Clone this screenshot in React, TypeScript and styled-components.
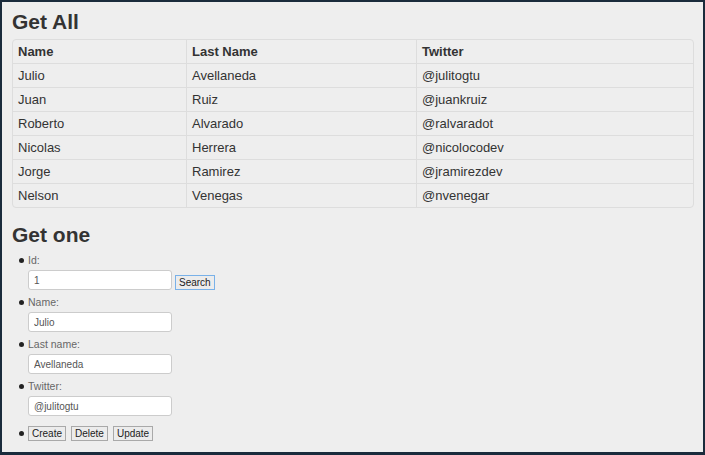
import { FC } from "react";
import styled, { createGlobalStyle } from "styled-components";

const GlobalStyle = createGlobalStyle`
  html, body {
    margin: 0;
    padding: 0;
    background: #eeeeee;
  }
  body {
    font-family: "Liberation Sans", Arial, Helvetica, sans-serif;
    color: #333333;
  }
`;

const Page = styled.div`
  box-sizing: border-box;
  width: 705px;
  height: 455px;
  border: 2px solid #1a2b3c;
  border-bottom-width: 3px;
  background: #eeeeee;
  padding: 6px 10px 0 10px;
  overflow: hidden;
`;

const Title = styled.h1`
  margin: 0;
  font-size: 21px;
  line-height: 28px;
  font-weight: bold;
  color: #333333;
`;

const TitleOne = styled(Title)`
  margin-top: 13px;
`;

const Table = styled.table`
  margin-top: 3px;
  width: 682px;
  border: 1px solid #dddddd;
  border-radius: 4px;
  border-collapse: separate;
  border-spacing: 0;
  table-layout: fixed;
  font-size: 13px;
`;

const Th = styled.th`
  box-sizing: border-box;
  height: 23px;
  padding: 0 5px;
  text-align: left;
  font-weight: bold;
  color: #333333;
  border-left: 1px solid #dddddd;
  &:first-child {
    border-left: none;
  }
`;

const Td = styled.td`
  box-sizing: border-box;
  height: 24px;
  padding: 0 5px;
  border-top: 1px solid #dddddd;
  border-left: 1px solid #dddddd;
  &:first-child {
    border-left: none;
  }
`;

const List = styled.ul`
  margin: 4px 0 0 0;
  padding-left: 16px;
  list-style: none;
  font-size: 10.5px;
  color: #666666;
`;

const Item = styled.li`
  position: relative;
  margin-bottom: 5px;
  &::before {
    content: "";
    position: absolute;
    left: -9px;
    top: 5px;
    width: 5px;
    height: 5px;
    border-radius: 50%;
    background: #222222;
  }
`;

const Label = styled.div`
  line-height: 14px;
  margin-bottom: 3px;
`;

const Input = styled.input`
  box-sizing: border-box;
  width: 144px;
  height: 20px;
  border: 1px solid #cccccc;
  border-radius: 3px;
  background: #ffffff;
  padding: 0 5px;
  font-family: "Liberation Sans", Arial, sans-serif;
  font-size: 10px;
  color: #555555;
  vertical-align: bottom;
  outline: none;
`;

const Button = styled.button<{ $focus?: boolean }>`
  box-sizing: border-box;
  height: 15px;
  padding: 0 3px;
  margin-left: ${(p) => (p.$focus ? "3px" : "0")};
  margin-right: 5px;
  border: 1px solid ${(p) => (p.$focus ? "#79b1e8" : "#a9a9a9")};
  background: #ececec;
  font-family: "Liberation Sans", Arial, sans-serif;
  font-size: 10px;
  line-height: 13px;
  color: #222222;
  vertical-align: bottom;
`;

const ButtonRow = styled.div`
  display: flex;
`;

const ButtonItem = styled(Item)`
  padding-top: 5px;
  &::before {
    top: 10px;
  }
`;

type Person = { name: string; last: string; twitter: string };

const people: Person[] = [
  { name: "Julio", last: "Avellaneda", twitter: "@julitogtu" },
  { name: "Juan", last: "Ruiz", twitter: "@juankruiz" },
  { name: "Roberto", last: "Alvarado", twitter: "@ralvaradot" },
  { name: "Nicolas", last: "Herrera", twitter: "@nicolocodev" },
  { name: "Jorge", last: "Ramirez", twitter: "@jramirezdev" },
  { name: "Nelson", last: "Venegas", twitter: "@nvenegar" },
];

const App: FC = () => {
  return (
    <>
      <GlobalStyle />
      <Page>
        <Title>Get All</Title>
        <Table>
          <colgroup>
            <col style={{ width: 173 }} />
            <col style={{ width: 230 }} />
            <col />
          </colgroup>
          <thead>
            <tr>
              <Th>Name</Th>
              <Th>Last Name</Th>
              <Th>Twitter</Th>
            </tr>
          </thead>
          <tbody>
            {people.map((p) => (
              <tr key={p.twitter}>
                <Td>{p.name}</Td>
                <Td>{p.last}</Td>
                <Td>{p.twitter}</Td>
              </tr>
            ))}
          </tbody>
        </Table>
        <TitleOne>Get one</TitleOne>
        <List>
          <Item>
            <Label>Id:</Label>
            <Input defaultValue="1" />
            <Button $focus>Search</Button>
          </Item>
          <Item>
            <Label>Name:</Label>
            <Input defaultValue="Julio" />
          </Item>
          <Item>
            <Label>Last name:</Label>
            <Input defaultValue="Avellaneda" />
          </Item>
          <Item>
            <Label>Twitter:</Label>
            <Input defaultValue="@julitogtu" />
          </Item>
          <ButtonItem>
            <ButtonRow>
              <Button>Create</Button>
              <Button>Delete</Button>
              <Button>Update</Button>
            </ButtonRow>
          </ButtonItem>
        </List>
      </Page>
    </>
  );
};

export default App;
